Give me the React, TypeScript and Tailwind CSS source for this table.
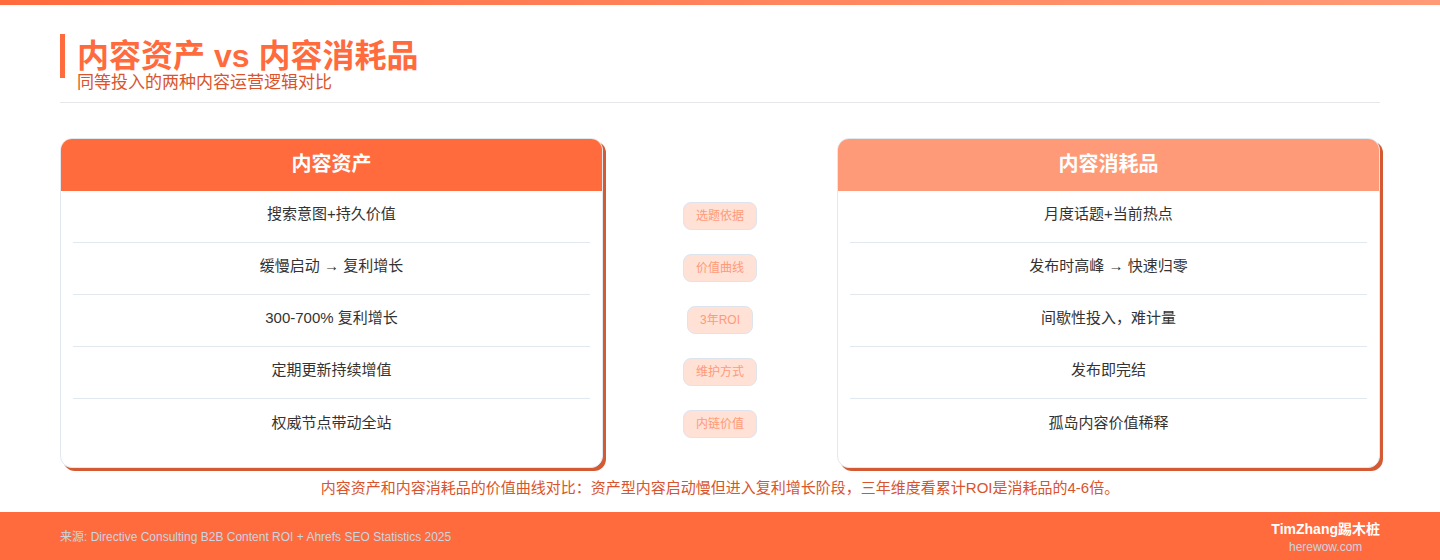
const rowsLeft = [
  "搜索意图+持久价值",
  "缓慢启动 → 复利增长",
  "300-700% 复利增长",
  "定期更新持续增值",
  "权威节点带动全站",
];

const rowsRight = [
  "月度话题+当前热点",
  "发布时高峰 → 快速归零",
  "间歇性投入，难计量",
  "发布即完结",
  "孤岛内容价值稀释",
];

const labels = ["选题依据", "价值曲线", "3年ROI", "维护方式", "内链价值"];

function Card({ title, rows, head }: { title: string; rows: string[]; head: string }) {
  return (
    <div className="overflow-hidden rounded-xl border border-[#e2e8f0] bg-white pb-4 shadow-[3px_3px_0_#d35a33]">
      <div className={`flex h-[52px] items-center justify-center pb-[2px] text-xl font-bold text-white ${head}`}>
        {title}
      </div>
      <div className="px-3">
        {rows.map((r, i) => (
          <div
            key={r}
            className={`flex h-[52px] items-center justify-center pb-1 text-[15px] text-[#333333] ${
              i < rows.length - 1 ? "border-b border-[#e2e8f0]" : ""
            }`}
          >
            {r}
          </div>
        ))}
      </div>
    </div>
  );
}

export default function App() {
  return (
    <div
      className="flex h-[560px] w-[1440px] flex-col bg-white"
      style={{ fontFamily: '"Liberation Sans", "Noto Sans CJK SC", sans-serif' }}
    >
      {/* TOP BAR */}
      <div className="h-[5px] bg-gradient-to-r from-[#ff6b3d] to-[#ff9a76]" />

      {/* TITLE */}
      <div className="px-[60px] pt-[29px]">
        <h1 className="border-l-[5px] border-[#ff6b3d] pl-3 text-[32px] font-bold leading-[44px] text-[#ff6b3d]">
          内容资产 vs 内容消耗品
        </h1>
        <p className="-mt-[5px] pl-[17px] text-[17px] leading-5 text-[#d9542c]">
          同等投入的两种内容运营逻辑对比
        </p>
        <div className="mt-[9px] h-px bg-[#e5e7eb]" />
      </div>

      {/* COMPARE */}
      <div className="mt-[35px] grid grid-cols-[543px_1fr_543px] px-[60px]">
        <Card title="内容资产" rows={rowsLeft} head="bg-[#ff6b3d]" />

        <div className="flex flex-col items-center pt-[52px]">
          {labels.map((l) => (
            <div key={l} className="flex h-[52px] items-center">
              <span className="rounded-lg border border-[#dde4ee] bg-[#ffe1d6] px-3 py-[5px] text-xs leading-4 text-[#ff9a78]">
                {l}
              </span>
            </div>
          ))}
        </div>

        <Card title="内容消耗品" rows={rowsRight} head="bg-[#ff9a78]" />
      </div>

      {/* CAPTION */}
      <p className="mt-[10px] text-center text-[15px] leading-5 text-[#d9542c]">
        内容资产和内容消耗品的价值曲线对比：资产型内容启动慢但进入复利增长阶段，三年维度看累计ROI是消耗品的4-6倍。
      </p>

      {/* FOOTER */}
      <div className="mt-auto flex h-12 items-center justify-between bg-[#ff6b3d] px-[60px]">
        <p className="pt-[2px] text-xs text-[#cbd5e1]">
          来源: Directive Consulting B2B Content ROI + Ahrefs SEO Statistics 2025
        </p>
        <div className="flex flex-col items-center pt-[3px]">
          <span className="text-sm font-bold leading-[19px] text-white">TimZhang踢木桩</span>
          <span className="text-xs leading-4 text-[#cbd5e1]">herewow.com</span>
        </div>
      </div>
    </div>
  );
}
